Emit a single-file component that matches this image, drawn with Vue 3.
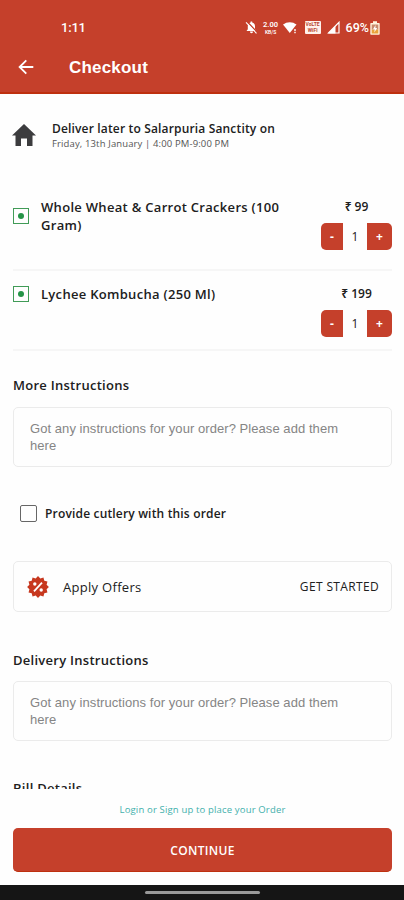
<script setup>
import { ref } from 'vue'

const items = ref([
  { name: 'Whole Wheat & Carrot Crackers (100 Gram)', price: 99, qty: 1 },
  { name: 'Lychee Kombucha (250 Ml)', price: 199, qty: 1 },
])
const cutlery = ref(false)
const badge = Array.from({ length: 24 }, (_, i) => {
  const r = i % 2 ? 8.9 : 10.9
  const a = (i * Math.PI) / 12
  return `${(11 + r * Math.sin(a)).toFixed(2)},${(11 - r * Math.cos(a)).toFixed(2)}`
}).join(' ')
</script>

<template>
  <div class="screen">
    <header class="header">
      <div class="status">
        <span class="time">1:11</span>
        <div class="indicators">
          <svg class="bell" width="13" height="13" viewBox="0 0 13 13">
            <path d="M1.500 10 2.800 8.300V5.200c0-2.100 1.200-3.400 2.800-3.700V.6h1.600v.9C8.900 1.800 10 3.100 10 5.200v3.100L11.300 10ZM5 10.600h3c0 1-.6 1.600-1.500 1.600S5 11.600 5 10.600Z" fill="#fff" />
            <path d="M2.200.8 12.700 11.800" stroke="#c5402b" stroke-width="1.300" />
            <path d="M1 1.300 11.500 12.300" stroke="#fff" stroke-width="1.100" />
          </svg>
          <div class="speed"><span>2.00</span><span class="unit">KB/S</span></div>
          <svg class="wifi" width="15" height="13" viewBox="0 0 15 13">
            <path d="M0 3.600C3.800.3 9.800.3 13.500 3.600L6.800 12Z" fill="#fff" />
            <path d="M12 8v2.300M12 11v1.300" stroke="#fff" stroke-width="1.400" />
          </svg>
          <div class="vo"><span>VoLTE</span><span>WiFi</span></div>
          <svg class="signal" width="13" height="13" viewBox="0 0 13 13">
            <path d="M1.500 12 12 1.300V12Z" fill="none" stroke="#fff" stroke-width="1.200" />
            <path d="M1 12.500 8.500 4.800v7.700Z" fill="#fff" />
          </svg>
          <span class="percent">69%</span>
          <svg class="battery" width="10" height="14" viewBox="0 0 10 14">
            <path d="M3 .3h4v1.700h2q.7 0 .7.7v10.300q0 .7-.7.7H1q-.7 0-.7-.7V2.700Q.3 2 1 2h2Z" fill="#fff3dc" />
            <path d="M1.700 8.500h6.600v4H1.700Z" fill="#e9a23b" />
            <path d="M1.700 3.500h6.600v5H1.700Z" fill="#c98a6c" />
            <path d="M5.600 4 3 8.300h1.700L4.300 11.500 7.200 7H5.400Z" fill="#fff" />
          </svg>
        </div>
      </div>
      <div class="appbar">
        <svg class="back" width="16" height="16" viewBox="0 0 16 16" fill="none" stroke="#fff" stroke-width="1.800">
          <path d="M15.300 8H2M8.300 1.300 1.600 8l6.700 6.700" />
        </svg>
        <h1>Checkout</h1>
      </div>
    </header>

    <main class="content">
      <section class="delivery">
        <svg class="home" width="24" height="22" viewBox="0 0 24 22">
          <path d="M12 0 24 11.500h-3.500V22H15v-7.500H9V22H3.500V11.500H0Z" fill="#3c3c3e" />
        </svg>
        <div>
          <div class="address">Deliver later to Salarpuria Sanctity on</div>
          <div class="slot">Friday, 13th January | 4:00 PM-9:00 PM</div>
        </div>
      </section>

      <section v-for="item in items" :key="item.name" class="item">
        <span class="veg"><i></i></span>
        <div class="name">{{ item.name }}</div>
        <div class="amount">
          <div class="price">₹ {{ item.price }}</div>
          <div class="stepper">
            <button class="minus" @click="item.qty = Math.max(0, item.qty - 1)">-</button>
            <span>{{ item.qty }}</span>
            <button class="plus" @click="item.qty++">+</button>
          </div>
        </div>
      </section>

      <h2 class="more">More Instructions</h2>
      <div class="note">Got any instructions for your order? Please add them here</div>

      <div class="cutlery" @click="cutlery = !cutlery">
        <span class="box" :class="{ checked: cutlery }"></span>
        <span class="label">Provide cutlery with this order</span>
      </div>

      <section class="offers">
        <svg width="22" height="22" viewBox="0 0 22 22">
          <polygon :points="badge" fill="#c7381f" />
          <path d="M7 15.300 15 6.700" stroke="#fff" stroke-width="1.800" />
          <circle cx="7.800" cy="8" r="1.700" fill="#fff" />
          <circle cx="14.200" cy="14" r="1.700" fill="#fff" />
        </svg>
        <span class="apply">Apply Offers</span>
        <span class="start">GET STARTED</span>
      </section>

      <h2 class="instructions">Delivery Instructions</h2>
      <div class="note">Got any instructions for your order? Please add them here</div>
      <h2 class="bill">Bill Details</h2>
    </main>

    <footer class="footer">
      <a class="login">Login or Sign up to place your Order</a>
      <button class="continue">CONTINUE</button>
    </footer>
    <div class="navbar"><span></span></div>
  </div>
</template>

<style>
body {
  margin: 0;
  background: #fefefe;
}
</style>

<style scoped>
* {
  box-sizing: border-box;
}
.screen {
  width: 404px;
  height: 900px;
  display: flex;
  flex-direction: column;
  overflow: hidden;
  background: #fefefe;
  color: #202020;
  font-family: "Open Sans", "Noto Sans", sans-serif;
}
h1, h2 {
  margin: 0;
}
button {
  border: 0;
  padding: 0;
  color: #fff;
  background: #c5402b;
  font-family: inherit;
}
.header {
  flex: none;
  height: 94px;
  background: #c5402b;
  border-bottom: 2px solid #be300f;
  color: #fff;
}
.status {
  height: 41px;
  padding: 14px 24px 0 61px;
  display: flex;
  justify-content: space-between;
  align-items: center;
}
.time {
  font: 500 13px Roboto, sans-serif;
  letter-spacing: -.2px;
}
.indicators {
  display: flex;
  align-items: center;
}
.speed {
  width: 18px;
  margin-left: 4px;
  display: flex;
  flex-direction: column;
  align-items: center;
  font: 600 7.500px/8px Roboto, sans-serif;
}
.speed .unit {
  font-size: 5px;
  line-height: 6px;
}
.wifi {
  margin-left: 3px;
}
.vo {
  width: 16px;
  height: 13px;
  margin-left: 7px;
  padding-top: 1px;
  display: flex;
  flex-direction: column;
  align-items: center;
  overflow: hidden;
  background: #fff2ec;
  border-radius: 1px;
  color: #b94731;
  font: 700 5px/5.5px Roboto, sans-serif;
}
.signal {
  margin-left: 6px;
}
.percent {
  margin-left: 6px;
  font: 500 12.5px Roboto, sans-serif;
}
.battery {
  margin-left: 1px;
}
.appbar {
  height: 52px;
  padding-left: 18px;
  display: flex;
  align-items: center;
}
.appbar h1 {
  margin: 1px 0 0 35px;
  font: 700 17px "Liberation Sans", sans-serif;
  letter-spacing: .2px;
}
.content {
  flex: none;
  height: 695px;
  overflow: hidden;
  padding: 0 12px 0 13px;
}
.delivery {
  height: 95px;
  padding-top: 26px;
  display: flex;
  align-items: flex-start;
}
.home {
  margin: 4px 16px 0 -1px;
}
.address {
  font-size: 12px;
  line-height: 17px;
  font-weight: 600;
  letter-spacing: .16px;
  white-space: nowrap;
}
.slot {
  font-size: 9.500px;
  line-height: 13px;
  letter-spacing: .13px;
  color: #555;
  white-space: nowrap;
}
.item {
  height: 82px;
  display: flex;
  align-items: flex-start;
  border-bottom: 2px solid #f6f6f6;
}
.item + .item {
  height: 80px;
}
.veg {
  width: 16px;
  height: 16px;
  margin-top: 19px;
  display: flex;
  align-items: center;
  justify-content: center;
  border: 1.500px solid #419b57;
}
.veg i {
  width: 6px;
  height: 6px;
  border-radius: 50%;
  background: #259447;
}
.item + .item .veg {
  margin-top: 15px;
}
.name {
  width: 250px;
  margin: 9px 0 0 12px;
  font-size: 13px;
  line-height: 18px;
  font-weight: 600;
  letter-spacing: .3px;
}
.item + .item .name {
  margin-top: 14px;
}
.amount {
  width: 71px;
  margin-left: auto;
  padding-top: 9px;
}
.item + .item .amount {
  padding-top: 14px;
}
.price {
  text-align: center;
  font-size: 12px;
  line-height: 17px;
  font-weight: 600;
}
.stepper {
  margin-top: 8px;
  height: 27px;
  display: flex;
  align-items: center;
  justify-content: space-between;
  font-size: 12px;
}
.stepper button {
  height: 27px;
  font-size: 12px;
  font-weight: 700;
}
.minus {
  width: 22px;
  border-radius: 5px 0 0 5px;
}
.plus {
  width: 25px;
  border-radius: 0 5px 5px 0;
}
h2 {
  font-size: 13px;
  line-height: 18px;
  font-weight: 600;
  letter-spacing: .27px;
}
.more {
  margin-top: 25px;
}
.note {
  height: 60px;
  margin-top: 13px;
  padding: 12px 40px 0 16px;
  border: 1px solid #ebebeb;
  border-radius: 5px;
  color: #858585;
  font: 13px/17px "Liberation Sans", sans-serif;
  letter-spacing: .06px;
}
.cutlery {
  margin-top: 36px;
  height: 20px;
  padding-left: 7px;
  display: flex;
  align-items: center;
}
.box {
  width: 17px;
  height: 17px;
  border: 1.500px solid #666;
  border-radius: 2px;
}
.box.checked {
  background: #c5402b;
}
.label {
  margin-left: 8px;
  font-size: 12px;
  font-weight: 600;
  letter-spacing: .17px;
}
.offers {
  height: 51px;
  margin-top: 38px;
  padding: 0 12px 0 13px;
  display: flex;
  align-items: center;
  border: 1px solid #ebebeb;
  border-radius: 5px;
}
.apply {
  margin-left: 14px;
  font-size: 13px;
  font-weight: 500;
  letter-spacing: .3px;
}
.start {
  margin-left: auto;
  font-size: 12px;
  font-weight: 500;
  letter-spacing: .35px;
}
.instructions {
  margin-top: 39px;
}
.instructions + .note {
  margin-top: 12px;
}
.bill {
  margin-top: 38px;
}
.footer {
  flex: none;
  height: 96px;
  padding: 13px 12px 0 13px;
  display: flex;
  flex-direction: column;
  align-items: center;
}
.login {
  font-size: 9.500px;
  line-height: 16px;
  letter-spacing: .16px;
  color: #43b0ac;
}
.continue {
  width: 379px;
  height: 44px;
  margin-top: 10px;
  padding-top: 1px;
  border-radius: 5px;
  border-bottom: 1px solid #be300f;
  font-size: 12px;
  font-weight: 600;
  letter-spacing: .3px;
}
.navbar {
  flex: none;
  height: 15px;
  display: flex;
  justify-content: center;
  background: #151515;
}
.navbar span {
  width: 115px;
  height: 3px;
  margin-top: 6px;
  border-radius: 2px;
  background: #999;
}
</style>
